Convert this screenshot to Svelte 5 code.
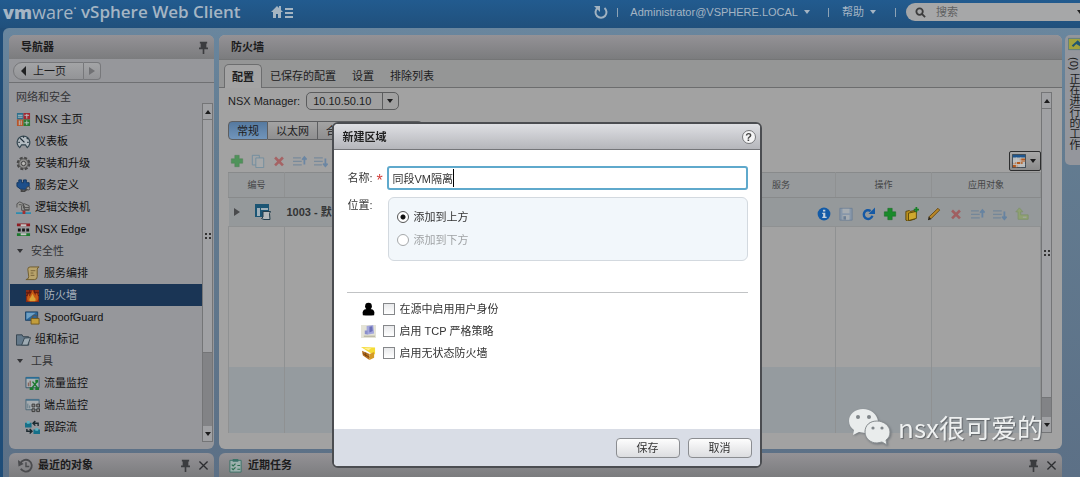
<script lang="ts">
  interface NavItem {
    label: string;
    icon?: string;
    kind?: "heading" | "group" | "child";
    selected?: boolean;
  }

  const navItems: NavItem[] = [
    { label: "网络和安全", kind: "heading" },
    { label: "NSX 主页", icon: "home-tiles" },
    { label: "仪表板", icon: "gauge" },
    { label: "安装和升级", icon: "gear" },
    { label: "服务定义", icon: "plug" },
    { label: "逻辑交换机", icon: "switch" },
    { label: "NSX Edge", icon: "edge" },
    { label: "安全性", kind: "group" },
    { label: "服务编排", icon: "scroll", kind: "child" },
    { label: "防火墙", icon: "fire", kind: "child", selected: true },
    { label: "SpoofGuard", icon: "guard", kind: "child" },
    { label: "组和标记", icon: "folder" },
    { label: "工具", kind: "group" },
    { label: "流量监控", icon: "flow", kind: "child" },
    { label: "端点监控", icon: "endpoint", kind: "child" },
    { label: "跟踪流", icon: "trace", kind: "child" },
  ];

  const tabs = ["配置", "已保存的配置", "设置", "排除列表"];
  const segments = ["常规", "以太网", "合"];
  const toolbar = ["add", "copy", "remove", "up", "down"];
  const rowActions = ["info", "save", "refresh", "add", "folder-add", "pencil", "remove", "up", "down", "merge"];
  const disabledActions = ["save", "remove", "up", "down", "merge"];
  const options = [
    { label: "在源中启用用户身份", icon: "user" },
    { label: "启用 TCP 严格策略", icon: "tcp" },
    { label: "启用无状态防火墙", icon: "stateless" },
  ];

  let activeTab = $state("配置");
  let activeSegment = $state("常规");
  let name = $state("同段VM隔离");
  let position = $state("above");
  let open = $state(true);
</script>

{#snippet icon(id: string)}
  <svg class="icon" viewBox="0 0 16 16" aria-hidden="true">
    {#if id === "home-tiles"}
      <path fill="#2c6f8c" d="M1 1h7v7H1z" /><path fill="#a3272f" d="M8 1h7v7H8z" />
      <path fill="#b8552a" d="M1 8h7v7H1z" /><path fill="#2b7a33" d="M8 8h7v7H8z" />
      <path stroke="#b7c4c6" d="M2 3.500h5M2 5.500h5M9 3.500h5M11.500 2v5M3.500 9v5M5.500 9v5M9 11.500h5M11.500 9v5" />
    {:else if id === "gauge"}
      <path fill="#b4bcc2" stroke="#33454f" stroke-width="1.300" d="M2.500 13a6.800 6.800 0 1 1 11 0l-1.500 1.500-2-3H6l-2 3z" />
      <path stroke="#222f38" fill="none" stroke-width="1.300" d="M4.500 4.500L9 9M8 2.500V4M12.500 4.500l-1 1M2.500 9H4M12 9h1.500" />
    {:else if id === "gear"}
      <circle cx="8" cy="8" r="5.800" fill="#8a8a88" stroke="#484848" stroke-width="3" stroke-dasharray="3 1.550" />
      <circle cx="8" cy="8" r="5" fill="#8f8f8d" stroke="#555" /><circle cx="8" cy="8" r="2.300" fill="#b8b8b5" stroke="#3e3e3e" />
    {:else if id === "plug"}
      <path fill="#1d4f8b" stroke="#12355f" d="M1 5h2V2h3v3h2V2h3v3h3v4l-3 3H5L1 9z" />
      <path fill="none" stroke="#444" stroke-width="2" d="M6 12v2h3l4-3" /><circle cx="13" cy="11" r="1.800" fill="#999" stroke="#444" />
    {:else if id === "switch"}
      <path fill="#9a9a98" stroke="#505050" d="M1 8V4l3-2 4 2v5M6 11V6l3-2 5 2v5z" />
      <path fill="none" stroke="#505050" d="M3 5h3M9 8h5M9 10h5M9 6v5" />
      <path stroke="#2c8cb0" stroke-width="2" d="M0 14h16" /><path fill="#a23030" d="M7 11.500h3V15H7z" />
    {:else if id === "edge"}
      <path fill="#8e1c22" d="M1 1.500h14v3H1z" /><path fill="#1d7a2e" d="M1 12h14v3H1z" />
      <path fill="#c5c5c5" d="M5 2.500h6v2H5zM5 12h6v2H5z" /><path fill="#161616" d="M2 7h3v3H2zM6.500 7h3v3h-3zM11 7h3v3h-3z" />
    {:else if id === "scroll"}
      <path fill="#b8a36c" stroke="#6e5b2c" d="M3 3.500Q3 1 5.500 1H15q-2 .5-2 3v7.500q0 3-3 3H1q3-.5 3-3z" />
      <path stroke="#75623a" d="M6 5h5M6 7.500h3M6 10h4" />
    {:else if id === "fire"}
      <path fill="#872b16" d="M1 2h14v13H1z" /><path stroke="#5e1a0e" d="M1 5h14M1 8h14M5 2v3M10 2v3M3 5v3" />
      <path fill="#c85a14" d="M3 14q-2-4 1-8l1 3 3-7 3 6 1-3q4 5 1 9z" /><path fill="#d8a236" d="M5 14q-1-3 1-4l2-4 2 4q2 1 1 4z" />
    {:else if id === "guard"}
      <path fill="#29669b" stroke="#1e4264" d="M.5 2h13v9H.5z" /><path fill="#6fa0c4" d="M1.500 3h10l-10 7z" />
      <path fill="none" stroke="#555" stroke-width="1.500" d="M8 9V7q2.500-3 5 0v2" /><path fill="#c29d3b" stroke="#73591d" d="M6.500 9h8.500v6H6.500z" />
    {:else if id === "folder"}
      <path fill="#64798a" stroke="#34434e" d="M.5 3h6l1 2h6v9H.5z" /><path fill="#9eabb3" stroke="#34434e" d="M9 6.500L15.500 6l-3 8H6z" />
    {:else if id === "flow"}
      <path fill="#aab2b6" stroke="#35566b" d="M1 1.500h14v11H1z" /><path stroke="#2a6c94" stroke-width="2" d="M1 2h14" />
      <path stroke="#7b4a3a" d="M3.500 11V7M5.500 11V5" /><path stroke="#1b7a2f" stroke-width="1.500" fill="none" d="M8 6l5 6M13 6l-5 6" /><path fill="#1b7a2f" d="M5 12h4v3H5zM11 12h4v3h-4zM11 4h3v3h-3z" />
    {:else if id === "endpoint"}
      <path fill="#a6acb0" stroke="#4c6575" d="M1 1.500h14v11H1z" /><path stroke="#48728b" stroke-width="2" d="M1 2h14" />
      <path stroke="#5f7785" d="M3 11V6M5 11V8" /><path fill="#888" stroke="#393939" d="M7.500 6.500h3v3h-3zM12.500 6.500h3v3h-3zM7.500 11.500h3v3h-3zM12.500 11.500h3v3h-3z" />
    {:else if id === "trace"}
      <path fill="#157089" d="M0 3h7v5H0zM9 10h7v5H9z" /><path fill="#62b0bf" d="M2 1h3v3H2zM11 8.500h3v3h-3z" />
      <path fill="none" stroke="#1c2a30" stroke-width="1.500" d="M9 3.500h5v3M11 1L8.500 3.500 11 6M7 12H2V9.500M5 9.500L7.500 12 5 14.500" />
    {:else if id === "add"}
      <path fill="#198a2b" stroke="#1b6a27" stroke-width=".6" d="M5.500 1.500h5v4h4v5h-4v4h-5v-4h-4v-5h4z" />
    {:else if id === "copy"}
      <path fill="#a2a8ab" stroke="#4f7f9c" d="M1.500 1.500h8v11h-8z" /><path fill="#a9adaf" stroke="#4f7f9c" d="M5.500 4.500h9v11h-9z" />
    {:else if id === "remove"}
      <path fill="none" stroke="#a83a3c" stroke-width="3" d="M3.500 4l9 9M12.500 4l-9 9" />
    {:else if id === "up"}
      <path fill="none" stroke="#5f7c98" stroke-width="1.500" d="M0 4.500h9M0 8.500h10M0 12.500h10" /><path fill="none" stroke="#4775a5" stroke-width="2" d="M13 12V4M10.500 6.500L13 3.500l2.500 3" />
    {:else if id === "down"}
      <path fill="none" stroke="#5f7c98" stroke-width="1.500" d="M0 4.500h10M0 8.500h10M0 12.500h9" /><path fill="none" stroke="#4775a5" stroke-width="2" d="M13 5v9M10.500 11L13 14l2.500-3" />
    {:else if id === "info"}
      <circle cx="8" cy="8" r="7.300" fill="#135ba7" /><path fill="#c3d0dc" d="M6.800 3h2.700v2.200H6.800zM6 6.500h3.500V11H11v1.500H6V11h1V8H6z" />
    {:else if id === "save"}
      <path fill="#7f97b4" stroke="#526f92" d="M1 1.500h14v13.500H1z" /><path fill="#b2b9c1" d="M4 2h8v5H4zM4 9h8v5.500H4z" /><path fill="#526f92" d="M5 10.500h3v4H5z" />
    {:else if id === "refresh"}
      <path fill="none" stroke="#1559a5" stroke-width="2.800" d="M11 4.500A5 5 0 1 0 13 10" /><path fill="#1559a5" d="M8.500 8H16V.5z" />
    {:else if id === "folder-add"}
      <path fill="#b98f1d" stroke="#564207" d="M1 5l4-1 1 1 5-1v10l-8 2-2-1z" /><path fill="#cfa92e" stroke="#564207" d="M4 7l9-2v8l-9 2.500z" /><path stroke="#168026" stroke-width="2" d="M13 0v6M10 3h6" />
    {:else if id === "pencil"}
      <path fill="#b98727" stroke="#614511" d="M2 11.500L12.500 1.500l2 2L4.500 13.500z" /><path fill="#2d2619" d="M1 15l1-4 3 3z" />
    {:else if id === "merge"}
      <path fill="#8ca757" stroke="#71904a" d="M1 5.500L5 1l4 4.500H6.500V9h8.500v5H3.500V5.500z" /><path fill="#a7ad9e" d="M9 11h4v1.500H9z" />
    {:else if id === "user"}
      <circle cx="8" cy="4.500" r="3.600" /><path d="M2 14q-1.500-6 4-6.500h4q5.500 .5 4 6.500-6 1-12 0z" />
    {:else if id === "tcp"}
      <path fill="#e4e3d6" d="M0 1h16v14H0z" /><path fill="#a3a7dc" d="M6 2l7-1 1 9-8 1.500z" /><path fill="#6b6fb8" d="M9 3l3-.5.500 5L9 9z" /><path fill="#8b8fca" d="M4 7h3v4H4z" /><path stroke="#aaa890" d="M3 13h12" />
    {:else if id === "stateless"}
      <path fill="#f5dc35" d="M0 1l15 .5V9L9 7z" /><path fill="#b5701f" d="M1 5l8 3.500V15l-7-5z" /><path fill="#d59a26" d="M9 8.500l5-2v6L9 15z" /><path stroke="#7a4311" fill="none" d="M2 8l7 4M5 7v4" /><path fill="#fff0a0" d="M3 2l8 .5-3 2z" />
    {:else if id === "pin"}
      <path fill="#3b3c3f" d="M3.500 1h9v2h-1v5h2v2H9v6H7v-6H2.500V8h2V3h-1z" />
    {:else if id === "close"}
      <path stroke="#2c2d30" stroke-width="1.600" d="M3 3l10 10M13 3L3 13" />
    {:else if id === "history"}
      <path fill="none" stroke="#4a4b4e" stroke-width="2" d="M2.500 6A6.300 6.300 0 1 1 3 11.500" /><path fill="#4a4b4e" d="M0 2l.5 7L6 6.500z" /><path fill="none" stroke="#4a4b4e" stroke-width="1.500" d="M8.500 4.500V9H12" />
    {:else if id === "tasks"}
      <path fill="#9db1ae" stroke="#3b7268" d="M2 2.500h12v12.500H2z" /><path fill="#3b7268" d="M5 1h6v3H5z" /><path fill="none" stroke="#2c6d50" stroke-width="1.300" d="M4 7l1.500 1.500L8 6M4 11l1.500 1.500L8 10M10 8h3M10 12h3" />
    {:else if id === "section"}
      <path fill="#1b5574" d="M0 0h14v13H0z" /><path fill="#9fb0ba" d="M2 4h3v8H2zM6 4h7v2H6z" /><path fill="#b2b8ba" stroke="#213d4c" d="M8 7.500h7.500l-1 2 .5 6H9l-2.500-1L8 13z" />
    {:else if id === "grid"}
      <path fill="#b9bcbd" stroke="#2d3a47" d="M.5.500h15v15H.5z" /><path fill="#1f568e" d="M1 1h14v3H1z" /><path fill="#b65a1c" d="M9 5h6v4H9zM4 9h8v3H4zM1 11h5v4H1z" /><path stroke="#c2c4c4" d="M1 8h14M1 12h14M5 4v11M10 4v11" />
    {:else if id === "work"}
      <path fill="#a2a23c" stroke="#4c7488" d="M.5.500h16v15H.5z" /><path fill="#1f5672" d="M5 10l8-7 3 3v5l-5-3-4 4z" />
    {/if}
  </svg>
{/snippet}

<div class="app">
  <header class="topbar">
    <div class="brand"><b>vm</b><span>ware</span><sup>•</sup></div>
    <h1>vSphere Web Client</h1>
    <button class="home" aria-label="主页">
      <svg viewBox="0 0 24 14" aria-hidden="true">
        <path fill="#a5b5c2" d="M0 7l6-6 2 2V1h2v4l2 2h-2v6H7V9H5v4H2V7z" />
        <path stroke="#a5b5c2" stroke-width="2" d="M14 4h8M14 8h8M14 12h8" />
      </svg>
    </button>
    <button class="reload" aria-label="刷新">
      <svg viewBox="0 0 16 16" aria-hidden="true">
        <path fill="none" stroke="#a2b3c1" stroke-width="2" d="M4.500 4A5.500 5.500 0 1 0 11.500 4" />
        <path fill="#a2b3c1" d="M1 2h6v6z" />
      </svg>
    </button>
    <i class="bar"></i>
    <button class="menu user">Administrator@VSPHERE.LOCAL <i class="caret"></i></button>
    <i class="bar"></i>
    <button class="menu help">帮助 <i class="caret"></i></button>
    <i class="bar"></i>
    <label class="search">
      <svg viewBox="0 0 12 12" aria-hidden="true">
        <circle cx="5" cy="5" r="3.500" fill="none" stroke="#3c3c3c" stroke-width="2" /><path stroke="#3c3c3c" stroke-width="2" d="M7.500 7.500L11 11" />
      </svg>
      <input type="search" placeholder="搜索" aria-label="搜索" />
      <i class="caret"></i>
    </label>
  </header>

  <main class="workspace">
    <section class="panel navigator">
      <div class="panel-title"><h2>导航器</h2>{@render icon("pin")}</div>
      <div class="history">
        <button class="back"><i class="tri left"></i>上一页</button>
        <button class="forward" aria-label="下一页"><i class="tri right"></i></button>
      </div>
      <div class="nav-body">
        <nav>
          {#each navItems as item}
            {#if item.kind === "heading"}
              <h3>{item.label}</h3>
            {:else if item.kind === "group"}
              <button class="group"><i class="caret"></i>{item.label}</button>
            {:else}
              <a href="#{item.icon}" class:child={item.kind === "child"} class:selected={item.selected}>
                {@render icon(item.icon ?? "")}{item.label}
              </a>
            {/if}
          {/each}
        </nav>
        <div class="scrollbar">
          <span class="end"><i class="tri up"></i></span>
          <span class="thumb"><i class="grip"></i></span>
          <span class="track"></span>
          <span class="end"><i class="caret"></i></span>
        </div>
      </div>
    </section>

    <section class="panel firewall">
      <div class="panel-title"><h2>防火墙</h2></div>
      <div class="tabs" role="tablist">
        {#each tabs as tab}
          <button role="tab" aria-selected={activeTab === tab} class:active={activeTab === tab} onclick={() => (activeTab = tab)}>{tab}</button>
        {/each}
      </div>
      <div class="content">
        <div class="config">
          <div class="manager">
            <label for="manager">NSX Manager:</label>
            <span class="select"><select id="manager"><option>10.10.50.10</option></select><i class="caret"></i></span>
          </div>
          <div class="segments">
            {#each segments as segment}
              <button class:active={activeSegment === segment} onclick={() => (activeSegment = segment)}>{segment}</button>
            {/each}
          </div>
          <div class="toolbar">
            {#each toolbar as action}
              <button class="faded" aria-label={action}>{@render icon(action)}</button>
            {/each}
            <button class="columns" aria-label="列">{@render icon("grid")}<i class="caret"></i></button>
          </div>
          <div class="table-wrap">
            <table>
              <colgroup>
                <col class="c-no" /><col /><col class="c-service" /><col class="c-action" /><col class="c-target" />
              </colgroup>
              <thead>
                <tr><th>编号</th><th></th><th>服务</th><th>操作</th><th>应用对象</th></tr>
              </thead>
              <tbody>
                <tr class="section">
                  <td><div class="section-no"><i class="tri right"></i>{@render icon("section")}</div></td>
                  <td><b>1003 - 默</b></td>
                  <td colspan="3">
                    <div class="actions">
                      {#each rowActions as action}
                        <button class:faded={disabledActions.includes(action)} aria-label={action}>{@render icon(action)}</button>
                      {/each}
                    </div>
                  </td>
                </tr>
                <tr><td></td><td></td><td></td><td></td><td></td></tr>
                <tr class="stripe"><td></td><td></td><td></td><td></td><td></td></tr>
              </tbody>
            </table>
          </div>
        </div>
        <div class="scrollbar wide">
          <span class="end"><i class="tri up"></i></span>
          <span class="thumb"><i class="grip"></i></span>
          <span class="track"></span>
          <span class="end"><i class="caret"></i></span>
        </div>
      </div>
    </section>

    <aside class="rail">
      {@render icon("work")}
      <span>(0) 正在进行的工作</span>
    </aside>

    <section class="panel dock">
      <div class="panel-title">{@render icon("history")}<h2>最近的对象</h2>{@render icon("pin")}{@render icon("close")}</div>
    </section>
    <section class="panel dock">
      <div class="panel-title">{@render icon("tasks")}<h2>近期任务</h2>{@render icon("pin")}{@render icon("close")}</div>
    </section>
  </main>
</div>

{#if open}
  <div class="overlay">
    <div class="dialog" role="dialog" aria-labelledby="dialog-title">
      <div class="dialog-header">
        <h2 id="dialog-title">新建区域</h2>
        <button class="help-btn" aria-label="帮助">?</button>
      </div>
      <div class="dialog-body">
        <div class="field">
          <label for="section-name">名称:</label>
          <span class="required">*</span>
          <div class="name-box">
            <input id="section-name" type="text" bind:value={name} />
            <i class="cursor"></i>
          </div>
        </div>
        <div class="field place">
          <span class="field-label">位置:</span>
          <span class="required"></span>
          <div class="radios">
            <label><input type="radio" value="above" bind:group={position} />添加到上方</label>
            <label class="disabled"><input type="radio" value="below" bind:group={position} disabled />添加到下方</label>
          </div>
        </div>
        <hr />
        <div class="options">
          {#each options as option}
            <label>{@render icon(option.icon)}<input type="checkbox" />{option.label}</label>
          {/each}
        </div>
      </div>
      <div class="dialog-footer">
        <button onclick={() => (open = false)}>保存</button>
        <button onclick={() => (open = false)}>取消</button>
      </div>
    </div>
  </div>
{/if}

<div class="watermark">
  <svg viewBox="0 0 42 37" aria-hidden="true">
    <path fill="#e9ecec" d="M14 0C6 0 0 5 0 12c0 4 2 7 5 9l-1 5 6-3 6 1c-1-7 5-13 13-12C28 5 22 0 14 0z" />
    <path fill="#e9ecec" stroke="#8a8f92" stroke-width="1" d="M28 12c-7 0-12 4-12 11 0 6 5 11 12 11l5-1 5 3-1-5c3-2 4-5 4-8 0-6-6-11-13-11z" />
    <circle cx="9" cy="8" r="2" fill="#80868a" /><circle cx="20" cy="8" r="2" fill="#80868a" />
    <circle cx="24" cy="19" r="1.600" fill="#80868a" /><circle cx="33" cy="19" r="1.600" fill="#80868a" />
  </svg>
  <span>nsx很可爱的</span>
</div>

<style>
  :global(body) {
    font: 11px/16px "Liberation Sans", "Noto Sans CJK SC", sans-serif;
    color: #1c1c1d;
    overflow: hidden;
  }

  h1, h2, h3 {
    margin: 0;
    font-size: 11px;
  }

  button {
    font: inherit;
    color: inherit;
    padding: 0;
    border: 0;
    background: none;
  }

  .icon {
    width: 14px;
    height: 14px;
    display: block;
    flex: none;
  }

  .app {
    height: 100vh;
    display: flex;
    flex-direction: column;
    background: #1f4d78;
  }

  .topbar {
    height: 28px;
    flex: none;
    display: flex;
    align-items: center;
    box-sizing: border-box;
    padding: 0 0 4px 3px;
    color: #a5b5c4;
    background: linear-gradient(#225b8f, #20507c);
  }

  .brand {
    width: 78px;
    font: 18px/24px "Open Sans", sans-serif;
    display: flex;
  }

  .brand b {
    font-weight: 800;
  }

  .brand sup {
    font-size: 8px;
    line-height: 16px;
  }

  h1 {
    font: 600 17px/24px "Open Sans", sans-serif;
  }

  .home {
    margin-left: 30px;
    margin-right: auto;
  }

  .home svg {
    width: 24px;
    height: 14px;
    display: block;
  }

  .reload svg {
    width: 16px;
    height: 16px;
    display: block;
    margin-right: 8px;
  }

  .bar {
    width: 1px;
    height: 9px;
    background: #8ea3b5;
  }

  .menu {
    display: flex;
    align-items: center;
    gap: 6px;
    white-space: nowrap;
  }

  .user {
    margin: 0 18px 0 12px;
  }

  .help {
    margin: 0 19px 0 13px;
  }

  .search {
    width: 174px;
    height: 18px;
    margin-left: 10px;
    box-sizing: border-box;
    display: flex;
    align-items: center;
    gap: 10px;
    padding-left: 9px;
    border-radius: 9px 0 0 9px;
    background: #a6a7a8;
    color: #222;
  }

  .search .caret {
    margin-right: -3px;
  }

  .search svg {
    width: 11px;
    height: 11px;
    flex: none;
  }

  .search input {
    min-width: 0;
    flex: 1;
    border: 0;
    padding: 0;
    background: none;
    font: inherit;
  }

  .search input::placeholder {
    color: #606162;
  }

  .caret, .tri {
    width: 0;
    height: 0;
    flex: none;
    border: 3px solid transparent;
  }

  .caret {
    border-top: 4px solid currentColor;
    border-bottom: 0;
  }

  .tri.up {
    border-bottom: 4px solid currentColor;
    border-top: 0;
  }

  .tri.left {
    border: 5px solid transparent;
    border-left: 0;
    border-right-color: #202122;
  }

  .tri.right {
    border: 4px solid transparent;
    border-right: 0;
    border-left: 6px solid #4a4b4d;
  }

  .workspace {
    flex: 1;
    min-height: 0;
    margin-left: 3px;
    padding: 7px 0 0 6px;
    display: grid;
    grid-template-columns: 205px 1fr 13px;
    grid-template-rows: minmax(0, 1fr) 24px;
    gap: 4px 5px;
    border-radius: 6px 0 0 0;
    background: linear-gradient(#69869e, #637c91 25%, #5c7086);
  }

  .panel {
    display: flex;
    flex-direction: column;
    min-height: 0;
    overflow: hidden;
    border-radius: 6px;
    background: #96979b;
  }

  .panel-title {
    height: 24px;
    flex: none;
    display: flex;
    align-items: center;
    gap: 5px;
    padding: 0 4px 0 12px;
    background: linear-gradient(#949296, #7b7c7e);
  }

  .panel-title h2 {
    margin-right: auto;
  }

  .panel-title .icon {
    width: 13px;
    height: 13px;
  }

  .history {
    height: 24px;
    flex: none;
    box-sizing: border-box;
    display: flex;
    padding: 3px 4px 2px;
    border-bottom: 1px solid #6f7073;
  }

  .back, .forward {
    display: flex;
    align-items: center;
    border: 1px solid #77787b;
    background: linear-gradient(#a3a4a6, #939497);
  }

  .back {
    width: 71px;
    gap: 7px;
    padding-left: 7px;
    border-radius: 9px 0 0 9px;
  }

  .forward {
    width: 17px;
    padding-left: 5px;
    border-left: 0;
    border-radius: 0 4px 4px 0;
  }

  .forward .tri {
    border-left-color: #707174;
  }

  .nav-body {
    flex: 1;
    min-height: 0;
    display: flex;
    padding: 3px 1px 7px;
  }

  nav {
    flex: 1;
  }

  nav h3, nav a, nav .group {
    width: 100%;
    height: 22px;
    box-sizing: border-box;
    display: flex;
    align-items: center;
    gap: 4px;
    padding-left: 6px;
    font-weight: 400;
    color: #111;
    text-decoration: none;
  }

  nav h3, nav .group {
    color: #333437;
  }

  nav .group {
    gap: 8px;
    padding-left: 7px;
  }

  nav .icon {
    width: 15px;
    height: 15px;
  }

  nav a.child {
    padding-left: 15px;
  }

  nav a.selected {
    background: #1a3555;
    color: #a9b2bd;
  }

  .scrollbar {
    width: 11px;
    flex: none;
    margin-top: 17px;
    display: flex;
    flex-direction: column;
    box-sizing: border-box;
    border: 1px solid #747577;
    background: #a0a1a4;
  }

  .scrollbar .end {
    height: 15px;
    display: grid;
    place-items: center;
  }

  .scrollbar .thumb {
    flex: 237;
    display: grid;
    place-items: center;
    border: solid #747577;
    border-width: 1px 0;
  }

  .scrollbar .track {
    flex: 74;
    background: #828386;
  }

  .grip {
    width: 6px;
    height: 6px;
    background: conic-gradient(#333 0 0) 0 0 / 2px 2px no-repeat, conic-gradient(#333 0 0) 100% 0 / 2px 2px no-repeat,
      conic-gradient(#333 0 0) 0 100% / 2px 2px no-repeat, conic-gradient(#333 0 0) 100% 100% / 2px 2px no-repeat;
  }

  .firewall {
    background: #a2a2a2;
  }

  .tabs {
    height: 29px;
    flex: none;
    box-sizing: border-box;
    display: flex;
    align-items: flex-end;
    gap: 8px;
    padding-left: 5px;
    border-top: 1px solid #747576;
    background: #959696;
    box-shadow: inset 0 -1px #6c6d6e;
  }

  .tabs button {
    height: 24px;
    padding: 0 4px;
  }

  .tabs button.active {
    padding: 0 7px;
    border: 1px solid #6c6d6e;
    border-bottom: 0;
    border-radius: 5px 5px 0 0;
    background: #a4a4a4;
    font-weight: 700;
    margin-right: -4px;
  }

  .content {
    flex: 1;
    min-height: 0;
    display: flex;
    padding: 4px 10px 16px 9px;
  }

  .config {
    flex: 1;
    min-width: 0;
    display: flex;
    flex-direction: column;
  }

  .manager {
    display: flex;
    align-items: center;
    gap: 6px;
    height: 18px;
  }

  .select {
    position: relative;
    display: flex;
  }

  .select select {
    appearance: none;
    width: 93px;
    height: 18px;
    padding: 0 6px;
    border: 1px solid #5b5c5d;
    border-radius: 5px;
    background: linear-gradient(90deg, transparent 75px, #5b5c5d 75px 76px, transparent 76px), #a0a0a0;
    font: inherit;
    color: inherit;
  }

  .select .caret {
    position: absolute;
    right: 6px;
    top: 7px;
    pointer-events: none;
  }

  .segments {
    display: flex;
    height: 19px;
    margin-top: 11px;
  }

  .segments button {
    padding: 0 8px;
    border: 1px solid #5d5e60;
    border-left-width: 0;
    background: linear-gradient(#a3a3a3, #8f8f90);
    white-space: nowrap;
  }

  .segments button:first-child {
    border-left-width: 1px;
    border-radius: 4px 0 0 4px;
  }

  .segments button:last-child {
    width: 104px;
    text-align: left;
    border-radius: 0 4px 4px 0;
  }

  .segments button.active {
    background: linear-gradient(#55799f, #7195bb);
  }

  .toolbar {
    height: 32px;
    flex: none;
    box-sizing: border-box;
    display: flex;
    align-items: center;
    gap: 7px;
    padding: 9px 0 0 2px;
  }

  .faded {
    opacity: 0.6;
  }

  .columns {
    width: 32px;
    height: 20px;
    margin-left: auto;
    box-sizing: border-box;
    display: flex;
    align-items: center;
    gap: 4px;
    padding-left: 2px;
    border: 1px solid #2d2e2f;
    border-radius: 2px;
    background: linear-gradient(#a8a8a8, #8b8b8b);
  }

  .table-wrap {
    flex: 1;
    min-height: 0;
  }

  table {
    width: 100%;
    height: 100%;
    table-layout: fixed;
    border-collapse: collapse;
  }

  .c-no {
    width: 56px;
  }

  .c-action {
    width: 96px;
  }

  .c-service, .c-target {
    width: 109px;
  }

  th, td {
    padding: 0;
    border-left: 1px solid #8f9192;
    border-right: 1px solid #8f9192;
  }

  th {
    height: 24px;
    border-top: 1px solid #888a8b;
    border-bottom: 1px solid #888a8b;
    background: #979a9c;
    color: #444546;
    font-size: 9px;
    font-weight: 400;
  }

  .section td {
    height: 28px;
    border: 0;
    border-bottom: 1px solid #8f9192;
    background: #95999b;
  }

  .section-no {
    display: flex;
    align-items: center;
    gap: 15px;
    padding-left: 5px;
  }

  .section-no .icon {
    width: 16px;
    height: 16px;
  }

  .section b {
    padding-left: 2px;
    color: #333435;
  }

  .actions {
    display: flex;
    justify-content: flex-end;
    gap: 8px;
    padding: 4px 12px 0 0;
  }

  .stripe td {
    height: 66px;
    background: #959b9f;
  }

  .scrollbar.wide {
    margin-top: 0;
  }

  .wide .thumb {
    flex: 292;
  }

  .wide .track {
    flex: 19;
  }

  .rail {
    align-self: start;
    height: 130px;
    display: flex;
    flex-direction: column;
    align-items: flex-end;
    gap: 6px;
    padding-top: 2px;
    box-sizing: border-box;
    overflow: hidden;
    border-radius: 5px 0 0 5px;
    background: #94969c;
    margin-left: -2px;
  }

  .rail .icon {
    width: 12px;
    height: 14px;
  }

  .rail span {
    writing-mode: vertical-rl;
    line-height: 13px;
    white-space: nowrap;
  }

  .dock {
    border-radius: 6px 6px 0 0;
  }

  .dock .panel-title {
    padding-left: 9px;
  }

  .dock .icon:first-child {
    width: 15px;
    height: 15px;
  }

  .overlay {
    position: fixed;
    inset: 0;
    display: flex;
    align-items: flex-start;
    justify-content: center;
    padding: 122px 0 0 13px;
  }

  .dialog {
    width: 430px;
    box-sizing: border-box;
    overflow: hidden;
    border: 2px solid #4b4d51;
    border-radius: 6px;
    background: #fff;
    color: #333;
  }

  .dialog-header {
    height: 25px;
    display: flex;
    align-items: center;
    justify-content: space-between;
    padding: 0 4px 0 9px;
    border-bottom: 1px solid #75767a;
    background: linear-gradient(#dedfe3, #b5b6bb);
    color: #222;
  }

  .help-btn {
    width: 14px;
    height: 14px;
    box-sizing: border-box;
    border: 1px solid #77787b;
    border-radius: 50%;
    background: #f4f4f5;
    font-weight: 700;
    line-height: 12px;
    color: #444;
  }

  .dialog-body {
    height: 279px;
    box-sizing: border-box;
    padding: 16px 12px 0 13px;
  }

  .field {
    display: grid;
    grid-template-columns: 30px 10px 1fr;
    align-items: center;
  }

  .field label, .field-label {
    padding-left: 1px;
    white-space: nowrap;
  }

  .required {
    color: #d3413c;
    font-size: 16px;
    padding-top: 6px;
  }

  .name-box {
    position: relative;
  }

  .name-box input {
    width: 100%;
    height: 24px;
    box-sizing: border-box;
    display: block;
    padding: 0 4px;
    border: 2px solid #5fa9cc;
    border-radius: 3px;
    outline: 0;
    background: #fff;
    font: inherit;
    color: #333;
  }

  .cursor {
    position: absolute;
    left: 66px;
    top: 3px;
    width: 1px;
    height: 18px;
    background: #000;
  }

  .place {
    align-items: start;
    margin-top: 7px;
  }

  .radios {
    display: flex;
    flex-direction: column;
    gap: 7px;
    margin-left: 1px;
    padding: 11px 8px 12px;
    border: 1px solid #d3d9df;
    border-radius: 6px;
    background: #f2f7fb;
  }

  .radios label {
    display: flex;
    align-items: center;
    gap: 5px;
    padding: 0;
  }

  .radios .disabled {
    color: #a0a3a5;
  }

  .radios input {
    appearance: none;
    width: 12px;
    height: 12px;
    margin: 0;
    box-sizing: border-box;
    border: 1px solid #555;
    border-radius: 50%;
    background: #fff;
  }

  .radios input:checked {
    background: radial-gradient(circle, #111 2px, #fff 3px);
  }

  .radios input:disabled {
    border-color: #a5a8aa;
  }

  hr {
    height: 1px;
    margin: 31px 0 0;
    border: 0;
    background: #c1c3c5;
  }

  .options {
    display: flex;
    flex-direction: column;
    gap: 6px;
    padding: 8px 0 0 14px;
  }

  .options label {
    display: flex;
    align-items: center;
    gap: 5px;
  }

  .options .icon {
    width: 15px;
    height: 15px;
    margin-right: 2px;
  }

  .options input {
    appearance: none;
    width: 12px;
    height: 12px;
    margin: 0;
    box-sizing: border-box;
    border: 1px solid #85878a;
    background: linear-gradient(#e8e9eb, #fff);
  }

  .dialog-footer {
    height: 37px;
    display: flex;
    align-items: center;
    justify-content: flex-end;
    gap: 8px;
    padding-right: 8px;
    background: #d9dde6;
  }

  .dialog-footer button {
    width: 64px;
    height: 20px;
    border: 1px solid #8b8d91;
    border-radius: 4px;
    background: linear-gradient(#fdfdfd, #dcdde0);
  }

  .watermark {
    position: fixed;
    right: 37px;
    bottom: 30px;
    display: flex;
    align-items: center;
    gap: 7px;
    color: #eef0f0;
    font: 26px/40px "Noto Sans CJK SC", sans-serif;
    text-shadow: 1px 1px 1px #606468;
  }

  .watermark svg {
    width: 42px;
    height: 37px;
    filter: drop-shadow(1px 1px 1px #70757a);
  }
</style>
